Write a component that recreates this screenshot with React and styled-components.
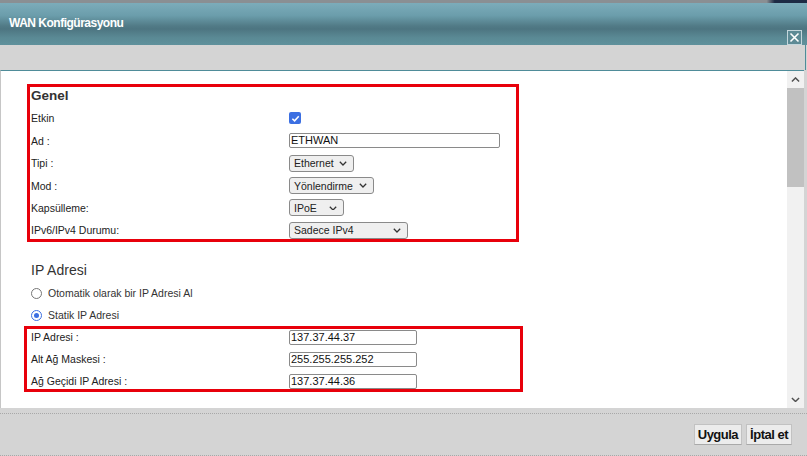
import styled, { createGlobalStyle } from 'styled-components';

const GlobalStyle = createGlobalStyle`
  html, body {
    margin: 0;
    padding: 0;
    background: #d4d4d4;
  }
  body {
    font-family: "Liberation Sans", Arial, sans-serif;
    color: #222;
  }
`;

const Dialog = styled.div`
  width: 807px;
  height: 456px;
  display: flex;
  flex-direction: column;
  overflow: hidden;
  background: #d4d4d4;
`;

const TopStrip = styled.div`
  height: 3px;
  background: linear-gradient(to right, #8a8f93 0%, #8a8f93 95%, #1d2a44 96%, #1d2a44 100%);
`;

const TitleBar = styled.div`
  height: 42px;
  display: flex;
  justify-content: space-between;
  padding: 0 5px 0 9px;
  background: linear-gradient(
    #7cacba 0%,
    #6b9dab 30%,
    #517a86 55%,
    #4d7581 62%,
    #5a8994 82%,
    #5f919c 100%
  );
`;

const Title = styled.div`
  color: #fff;
  font-size: 12px;
  font-weight: bold;
  letter-spacing: -0.5px;
  line-height: 14px;
  padding-top: 13px;
`;

const CloseButton = styled.div`
  align-self: flex-end;
  width: 13px;
  height: 13px;
  border: 1px solid #c4d6dc;
  background: #5d8a95;
  display: flex;
  align-items: center;
  justify-content: center;
`;

const Toolbar = styled.div`
  height: 25px;
  background: #d4d4d4;
  border-right: 1px solid #4f8c99;
  margin-right: 1px;
`;

const Body = styled.div`
  height: 337px;
  display: flex;
  border-top: 1px solid #4f8c99;
  margin-right: 3px;
  background: #fff;
  border-left: 1px solid #c6c6c6;
`;

const Content = styled.div`
  flex: 1;
  overflow: hidden;
  padding-top: 13px;
  font-size: 10.5px;
`;

const Box = styled.div`
  box-sizing: border-box;
  width: ${({ width }) => width}px;
  margin-left: ${({ left }) => left}px;
  border: 3px solid ${({ framed }) => (framed ? '#e8000b' : 'transparent')};
  padding-left: ${({ inset }) => inset}px;
  display: flex;
  flex-direction: column;
  gap: ${({ gap }) => gap}px;
`;

const Heading = styled.div`
  font-size: ${({ bold }) => (bold ? 13.5 : 14)}px;
  font-weight: ${({ bold }) => (bold ? 'bold' : 'normal')};
  color: #333;
  height: 18px;
  line-height: 18px;
  white-space: nowrap;
  margin: ${({ spacing }) => spacing};
`;

const Row = styled.div`
  display: flex;
  align-items: center;
  height: ${({ h }) => h}px;
`;

const Label = styled.div`
  width: 258px;
  flex-shrink: 0;
  color: #222;
`;

const TextInput = styled.div`
  box-sizing: border-box;
  width: ${({ width }) => width}px;
  height: 15px;
  border: 1px solid #8a8a8a;
  border-radius: 2px;
  padding-left: 1px;
  line-height: 13px;
  font-size: 11px;
  color: #111;
  background: #fff;
`;

const Select = styled.div`
  box-sizing: border-box;
  width: ${({ width }) => width}px;
  height: 17px;
  border: 1px solid #8a8a8a;
  border-radius: 3px;
  background: #efefef;
  display: flex;
  align-items: center;
  justify-content: space-between;
  padding: 0 6px 0 4px;
  font-size: 10.5px;
  white-space: nowrap;
  color: #222;

  svg {
    flex-shrink: 0;
  }
`;

const Checkbox = styled.div`
  width: 12px;
  height: 12px;
  border-radius: 2px;
  background: #3c6fe2;
  display: flex;
  align-items: center;
  justify-content: center;
`;

const RadioRow = styled.div`
  display: flex;
  align-items: center;
  height: 22px;
  margin-left: 30px;
  gap: 6px;
  font-size: 10.5px;
  color: #333;
`;

const Radio = styled.div`
  box-sizing: border-box;
  width: 11px;
  height: 11px;
  border-radius: 50%;
  border: 1px solid ${({ checked }) => (checked ? '#3c6fe2' : '#767676')};
  background: #fff;
  display: flex;
  align-items: center;
  justify-content: center;

  &::after {
    content: '';
    width: 5px;
    height: 5px;
    border-radius: 50%;
    background: ${({ checked }) => (checked ? '#3c6fe2' : 'transparent')};
  }
`;

const ScrollBar = styled.div`
  width: 17px;
  display: flex;
  flex-direction: column;
  background: #f1f1f1;
`;

const ScrollArrow = styled.div`
  height: 17px;
  display: flex;
  align-items: center;
  justify-content: center;
`;

const Thumb = styled.div`
  height: 99px;
  background: #c1c1c1;
`;

const Track = styled.div`
  flex: 1;
`;

const Footer = styled.div`
  flex: 1;
  display: flex;
  flex-direction: column;
  justify-content: space-between;
  padding-top: 5px;
`;

const DottedLine = styled.div`
  border-top: 1px dotted #a8a8a8;
`;

const ButtonBar = styled.div`
  display: flex;
  justify-content: flex-end;
  gap: 4px;
  padding-right: 15px;
`;

const Button = styled.div`
  box-sizing: border-box;
  height: 21px;
  padding: 0 3px;
  border: 1px solid #c2c2c2;
  border-bottom-color: #a9a9a9;
  background: #ececec;
  font-size: 13px;
  font-weight: bold;
  letter-spacing: -0.5px;
  line-height: 19px;
  color: #111;
`;

const Chevron = ({ up = false, color = '#333', size = 8 }) => (
  <svg width={size} height={size * 0.6} viewBox="0 0 10 6">
    <polyline
      points={up ? '1,5 5,1 9,5' : '1,1 5,5 9,1'}
      fill="none"
      stroke={color}
      strokeWidth="1.6"
    />
  </svg>
);

const general = [
  { label: 'Ad :', input: 'ETHWAN', width: 211 },
  { label: 'Tipi :', select: 'Ethernet', width: 65 },
  { label: 'Mod :', select: 'Yönlendirme', width: 85 },
  { label: 'Kapsülleme:', select: 'IPoE', width: 55 },
  { label: 'IPv6/IPv4 Durumu:', select: 'Sadece IPv4', width: 119 },
];

const addresses = [
  { label: 'IP Adresi :', value: '137.37.44.37' },
  { label: 'Alt Ağ Maskesi :', value: '255.255.255.252' },
  { label: 'Ağ Geçidi IP Adresi :', value: '137.37.44.36' },
];

const App = () => (
  <Dialog>
    <GlobalStyle />
    <TopStrip />
    <TitleBar>
      <Title>WAN Konfigürasyonu</Title>
      <CloseButton>
        <svg width="11" height="11" viewBox="0 0 11 11">
          <path d="M1.5 1.5 L9.5 9.5 M9.5 1.5 L1.5 9.5" stroke="#fff" strokeWidth="1.6" />
        </svg>
      </CloseButton>
    </TitleBar>
    <Toolbar />
    <Body>
      <Content>
        <Box framed width={492} left={26} inset={1} gap={4.4}>
          <Heading bold spacing="0">Genel</Heading>
          <Row h={18}>
            <Label>Etkin</Label>
            <Checkbox>
              <svg width="9" height="9" viewBox="0 0 10 10">
                <polyline points="1.5,5.2 4,7.6 8.6,2.4" fill="none" stroke="#fff" strokeWidth="1.7" />
              </svg>
            </Checkbox>
          </Row>
          {general.map(item => (
            <Row h={18} key={item.label}>
              <Label>{item.label}</Label>
              {item.input ? (
                <TextInput width={item.width}>{item.input}</TextInput>
              ) : (
                <Select width={item.width}>
                  {item.select}
                  <Chevron size={8} />
                </Select>
              )}
            </Row>
          ))}
        </Box>

        <Heading spacing="19px 0 3px 30px">IP Adresi</Heading>
        <RadioRow>
          <Radio />
          Otomatik olarak bir IP Adresi Al
        </RadioRow>
        <RadioRow>
          <Radio checked />
          Statik IP Adresi
        </RadioRow>

        <Box framed width={499} left={23} inset={4} gap={6}>
          {addresses.map(item => (
            <Row h={16} key={item.label}>
              <Label>{item.label}</Label>
              <TextInput width={128}>{item.value}</TextInput>
            </Row>
          ))}
        </Box>

        <Heading spacing="17px 0 0 30px">Statik DNS Üzerinden</Heading>
      </Content>
      <ScrollBar>
        <ScrollArrow>
          <Chevron up color="#505050" size={9} />
        </ScrollArrow>
        <Thumb />
        <Track />
        <ScrollArrow>
          <Chevron color="#505050" size={9} />
        </ScrollArrow>
      </ScrollBar>
    </Body>
    <Footer>
      <DottedLine />
      <ButtonBar>
        <Button>Uygula</Button>
        <Button>İptal et</Button>
      </ButtonBar>
      <DottedLine />
    </Footer>
  </Dialog>
);

export default App;
